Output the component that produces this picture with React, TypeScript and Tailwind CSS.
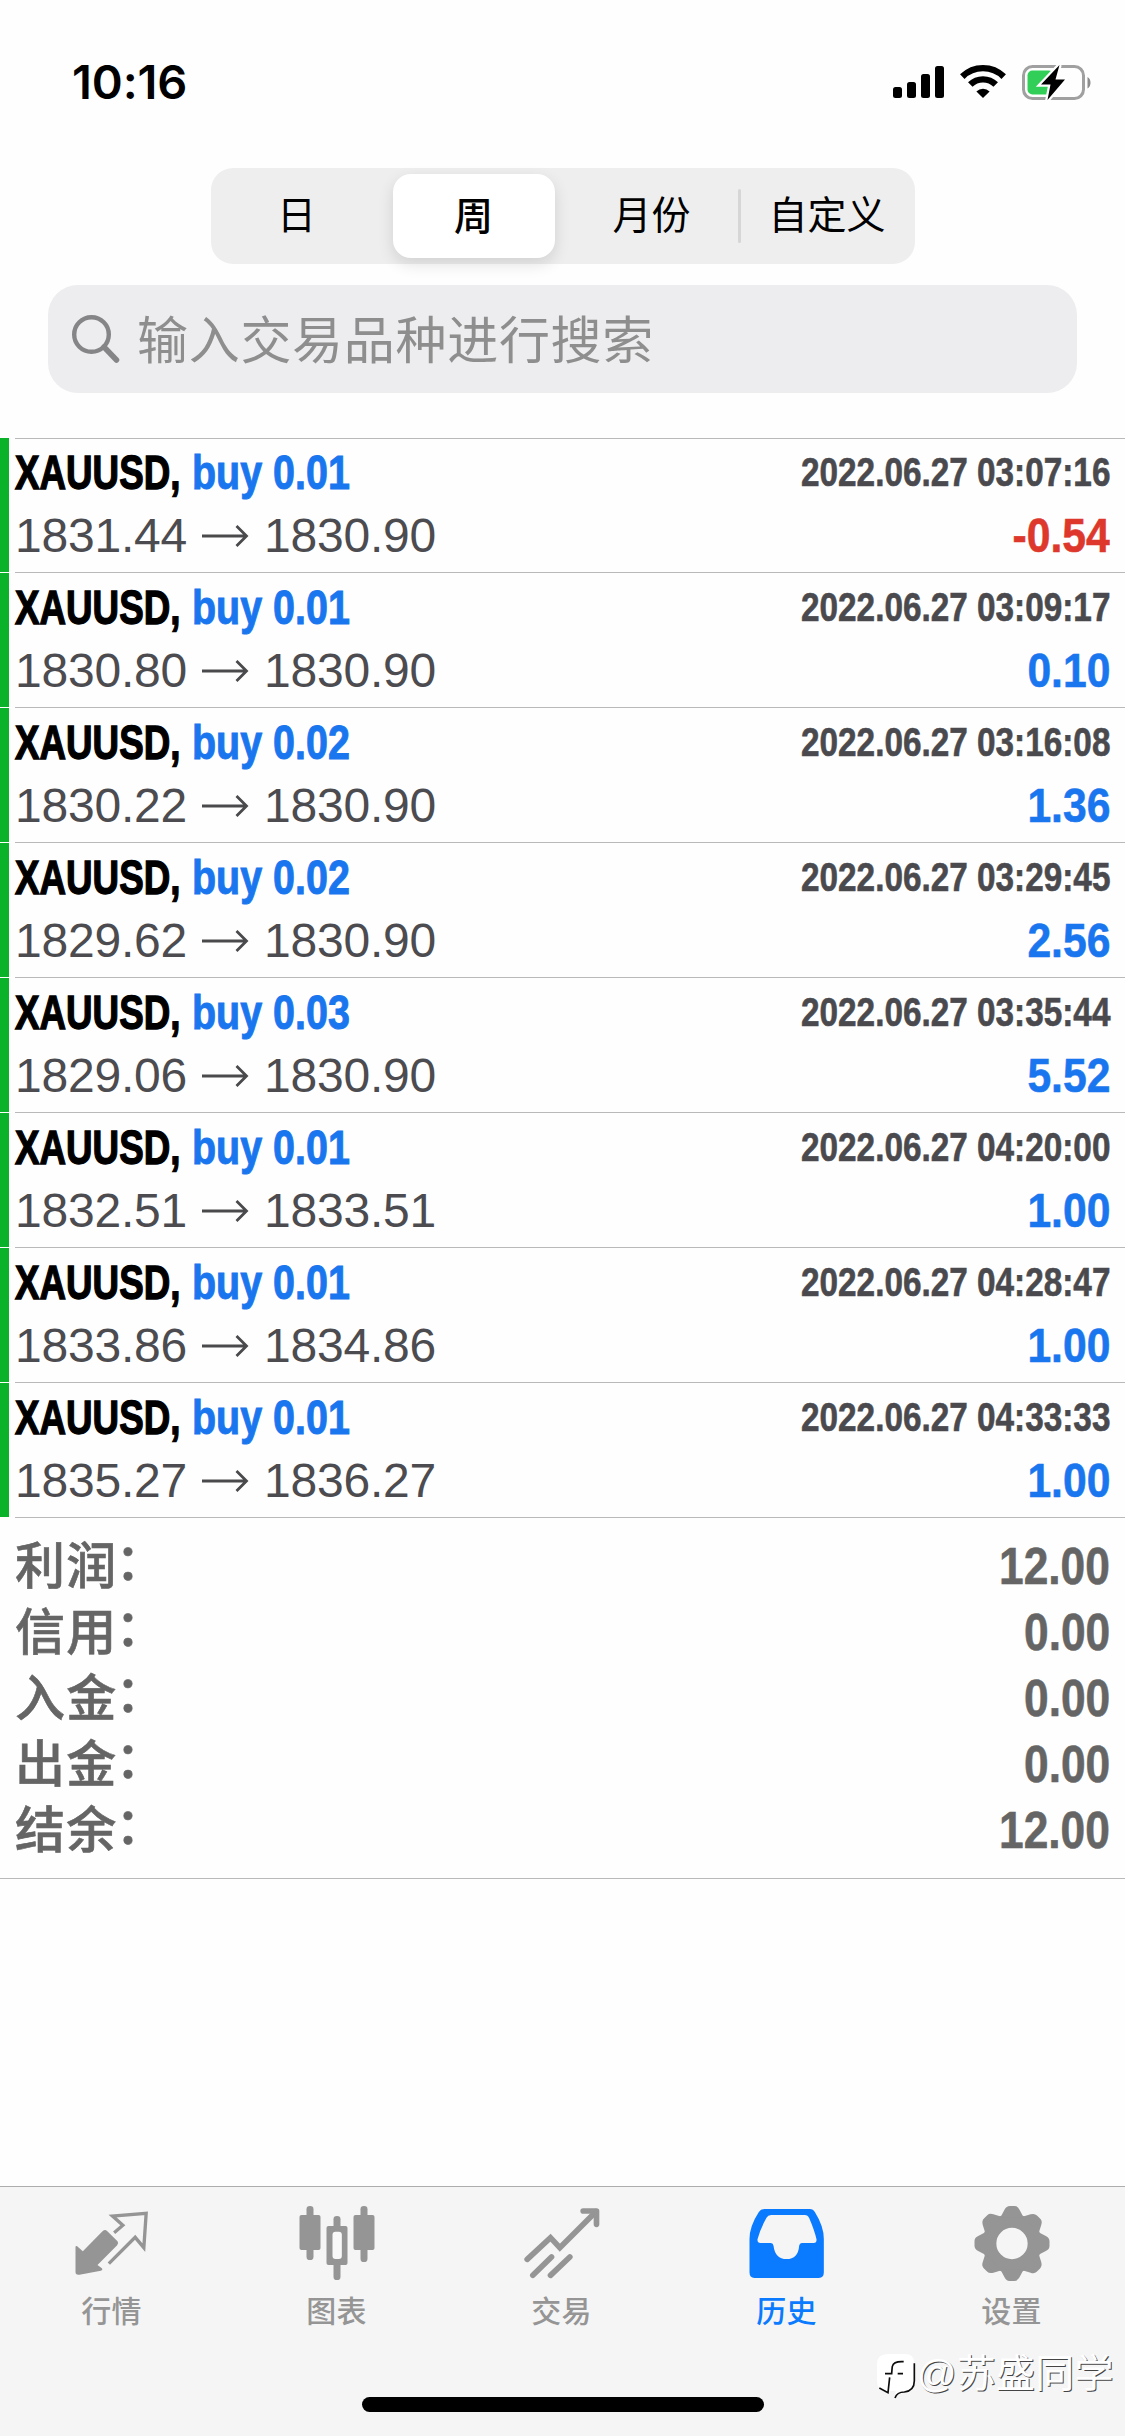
import type { ReactNode } from "react";

const CJK = "font-['Liberation_Sans','Noto_Sans_CJK_SC',sans-serif]";

const deals = [
  { volume: "0.01", open: "1831.44", close: "1830.90", time: "03:07:16", profit: "-0.54" },
  { volume: "0.01", open: "1830.80", close: "1830.90", time: "03:09:17", profit: "0.10" },
  { volume: "0.02", open: "1830.22", close: "1830.90", time: "03:16:08", profit: "1.36" },
  { volume: "0.02", open: "1829.62", close: "1830.90", time: "03:29:45", profit: "2.56" },
  { volume: "0.03", open: "1829.06", close: "1830.90", time: "03:35:44", profit: "5.52" },
  { volume: "0.01", open: "1832.51", close: "1833.51", time: "04:20:00", profit: "1.00" },
  { volume: "0.01", open: "1833.86", close: "1834.86", time: "04:28:47", profit: "1.00" },
  { volume: "0.01", open: "1835.27", close: "1836.27", time: "04:33:33", profit: "1.00" },
];

const totals = [
  ["利润", "12.00"],
  ["信用", "0.00"],
  ["入金", "0.00"],
  ["出金", "0.00"],
  ["结余", "12.00"],
];

function StatusBar() {
  return (
    <div className="flex h-[168px] items-start justify-between pl-[72px] pr-[33px] pt-[60px]">
      <div className="font-['Inter',sans-serif] text-[47px] leading-[44px] font-semibold tracking-[-0.1px] text-black">10:16</div>
      <div className="flex items-center pt-[4px]">
        <svg className="h-[36px] w-[52px]" viewBox="0 0 52 36">
          <rect x="0" y="23" width="9" height="11" rx="2.5" />
          <rect x="14" y="18" width="9" height="16" rx="2.5" />
          <rect x="28" y="10" width="9" height="24" rx="2.5" />
          <rect x="42" y="2" width="9" height="32" rx="2.5" />
        </svg>
        <svg className="ml-[15px] h-[36px] w-[46px]" viewBox="0 0 46 36" fill="none" stroke="#000" strokeWidth="6.4">
          <path d="M2.3 12.6a29.5 29.5 0 0 1 41.4 0" />
          <path d="M10.3 20.6a18 18 0 0 1 25.4 0" />
          <path d="M23 34l-6.6-6.6a9.4 9.4 0 0 1 13.2 0z" fill="#000" stroke="none" />
        </svg>
        <svg className="ml-[16px] h-[36px] w-[70px]" viewBox="0 0 70 36">
          <rect x="1.5" y="2.5" width="60" height="32" rx="9" fill="none" stroke="#a0a0a0" strokeWidth="3" />
          <path d="M65.5 13c4 2 4 9.5 0 11.500z" fill="#8c8c8c" />
          <rect x="5.5" y="6.5" width="26" height="24" rx="5" fill="#32cf58" />
          <path d="M37.5 1L19 20.5h9.500L25.500 36 43 15.500h-9.500z" fill="#000" stroke="#fff" strokeWidth="4.5" paintOrder="stroke" />
        </svg>
      </div>
    </div>
  );
}

function PeriodTabs() {
  return (
    <div className="mx-auto flex h-[96px] w-[704px] items-center rounded-[22px] bg-[#eeeeee] text-[39px] leading-[86px] text-black">
      <div className="w-[172px] text-center">日</div>
      <div className="ml-[10px] h-[84px] w-[162px] rounded-[18px] bg-white text-center font-medium shadow-[0_6px_16px_rgba(0,0,0,0.12)]">周</div>
      <div className="ml-[11px] w-[172px] text-center">月份</div>
      <div className="h-[54px] w-[3px] rounded-full bg-[#d6d6d8]" />
      <div className="w-[173px] text-center">自定义</div>
    </div>
  );
}

function SearchBox() {
  return (
    <div className="mx-[48px] mt-[21px] flex h-[108px] items-center rounded-[30px] bg-[#ededef] pl-[24px] text-[#8e8e8e]">
      <svg className="h-[50px] w-[50px]" viewBox="0 0 50 50" fill="none" stroke="#858587" strokeLinecap="round">
        <circle cx="19.5" cy="20.5" r="17.3" strokeWidth="4.4" />
        <path d="M32 33L44.5 46" strokeWidth="5.5" />
      </svg>
      <span className="ml-[15px] pt-[5px] text-[51px] leading-[60px] tracking-[0.7px]">输入交易品种进行搜索</span>
    </div>
  );
}

function LongArrow() {
  return (
    <svg className="mr-[15px] ml-[16px] h-[22px] w-[47px]" viewBox="0 0 47 22" fill="none" stroke="#4a4a4c" strokeWidth="2.8">
      <path d="M0 11h44M34.5 1L44.5 11 34.5 21" />
    </svg>
  );
}

function DealRow({ deal }: { deal: (typeof deals)[number] }) {
  return (
    <div className="flex h-[135px]">
      <div className="mb-px w-[9px] bg-[#09b228]" />
      <div className="ml-[6px] flex-1 border-b border-[#b9b9bb] pr-[15px] pt-[4px]">
        <div className="flex h-[60px] items-center justify-between font-bold">
          <div className="flex pt-px">
            <span className="w-[168px] origin-left scale-x-[0.75] text-[49px] whitespace-nowrap text-black [-webkit-text-stroke:1.4px_#000]">XAUUSD,</span>
            <span className="w-[150px] origin-left translate-x-[9px] scale-x-[0.805] text-[49px] whitespace-nowrap text-[#1976ee] [-webkit-text-stroke:1px_#1976ee]">buy {deal.volume}</span>
          </div>
          <span className="origin-right scale-x-[0.833] text-[40px] whitespace-nowrap text-[#4a4a4e] [-webkit-text-stroke:0.6px_#4a4a4e]">2022.06.27 {deal.time}</span>
        </div>
        <div className="flex h-[68px] items-center justify-between">
          <div className="flex items-center text-[48px] tracking-[-0.2px] text-[#4c4c50]">
            <span className="w-[171px]">{deal.open}</span>
            <LongArrow />
            <span>{deal.close}</span>
          </div>
          <span className={`origin-right scale-x-[0.87] text-[49px] font-bold [-webkit-text-stroke:0.6px_currentColor] ${deal.profit.startsWith("-") ? "text-[#dd382b]" : "text-[#1976ee]"}`}>{deal.profit}</span>
        </div>
      </div>
    </div>
  );
}

function Totals() {
  return (
    <div className="h-[361px] border-b border-[#b9b9bb] pr-[15px] pl-[15px] pt-[15px] text-[#656565]">
      {totals.map(([label, value]) => (
        <div key={label} className="flex h-[66px] items-center justify-between">
          <span className="flex pt-[2px] text-[50px] leading-[66px] font-medium tracking-[1.2px] [-webkit-text-stroke:0.6px_#656565]">
            {label}
            <span className="relative -top-[4px] -left-[2px]">：</span>
          </span>
          <span className="origin-right scale-x-[0.86] text-[51.5px] leading-[66px] font-bold [-webkit-text-stroke:0.6px_#656565]">{value}</span>
        </div>
      ))}
    </div>
  );
}

function Tab({ label, box, active, children }: { label: string; box: string; active?: boolean; children: ReactNode }) {
  return (
    <div className={`flex w-[225px] flex-col items-center pt-[17px] ${active ? "text-[#0a7aff]" : "text-[#959595]"}`}>
      <svg className="h-[78px] w-[78px]" viewBox={box} fill="currentColor" stroke="none">
        {children}
      </svg>
      <span className="mt-[8px] mr-[2px] text-[30px] leading-[44px] font-medium tracking-[0.3px]">{label}</span>
    </div>
  );
}

const gearTeeth = [0, 45, 90, 135, 180, 225, 270, 315];

function TabBar() {
  return (
    <div className="relative h-[250px] border-t border-[#adadad] bg-[#f5f5f5]">
      <div className="flex">
        <Tab label="行情" box="220.5 102 234 234">
          <path d="M225 232q0-6 5-3l17 15 59-60q7-7 13-2l32 32q5 6-1 12l-59 59 13 10q4 5-3 7l-64 12q-12 2-12-8z" />
          <path d="M341 188l26-22-31-28 101-8-7 103-26-31-79 79" fill="none" stroke="currentColor" strokeWidth="10" />
        </Tab>
        <Tab label="图表" box="895.5 102 234 234">
          <rect x="918" y="108" width="21" height="162" rx="10" />
          <rect x="897" y="135" width="63" height="105" rx="6" />
          <rect x="1080" y="108" width="21" height="168" rx="10" />
          <rect x="1059" y="135" width="63" height="105" rx="6" />
          <rect x="999" y="138" width="21" height="192" rx="10" />
          <rect x="978" y="168" width="63" height="117" rx="6" />
          <rect x="996" y="185" width="28" height="82" rx="9" fill="#f9f9f9" />
        </Tab>
        <Tab label="交易" box="370.5 102 234 234">
          <g fill="none" stroke="currentColor" strokeWidth="17" strokeLinecap="round">
            <path d="M380 268l70-65 28 30 108-108" />
            <path d="M397 316l56-55M450 316l58-55" />
            <path d="M548 123h40v40" strokeLinejoin="round" />
          </g>
        </Tab>
        <Tab label="历史" box="1045.5 102 234 234" active>
          <path fillRule="evenodd" d="M1092 117h136q10 0 15 9 27 43 27 81v100q0 17-15 17h-193q-15 0-15-17V207q0-38 28-81 6-9 17-9zM1112 135q-10 0-14 8-20 36-27 65-1 11 9 11h31q7 0 8 8 5 40 39 40 35 0 38-40 1-8 8-8h36q9 0 8-11-6-27-22-64-4-9-13-9z" />
        </Tab>
        <Tab label="设置" box="520.5 102 234 234">
          <circle cx="634.5" cy="220.5" r="68" fill="none" stroke="currentColor" strokeWidth="42" />
          {gearTeeth.map((angle) => (
            <path key={angle} transform={`rotate(${angle} 634.5 220.5)`} d="M600 142l12-23q6-11 16-11h14q10 0 15 11l12 23z" />
          ))}
        </Tab>
      </div>
      <div className="absolute top-[210px] left-[362px] h-[15px] w-[402px] rounded-full bg-black" />
      <div className="absolute top-[165px] left-[875px] flex items-start">
        <svg className="h-[48px] w-[42px]" viewBox="30 36 126 144">
          <path d="M68 42h52q28 0 28 28v52q0 26-24 34l-26 4-8 15 2-22H74l-6 7-26-14q-6-12-6-24V72q0-30 32-30z" fill="#fff" />
          <path d="M148 70v52q0 30-30 34-22 0-28 18M116 65q-30-2-34 14-1 6-2 22H60M74 112l-5 46-26-14M98 101h16" fill="none" stroke="#0c0c0c" strokeWidth="5" />
        </svg>
        <span className="text-[39px] leading-[43px] tracking-[0.2px] whitespace-nowrap text-white [text-shadow:1px_1px_0_#444]">@苏盛同学</span>
      </div>
    </div>
  );
}

export default function App() {
  return (
    <div className={`flex h-[2436px] w-[1125px] flex-col overflow-hidden bg-[#fefefe] ${CJK}`}>
      <StatusBar />
      <PeriodTabs />
      <SearchBox />
      <div className="relative mt-[45px]">
        <div className="absolute top-0 right-0 left-[15px] h-px bg-[#b9b9bb]" />
        {deals.map((deal) => (
          <DealRow key={deal.time} deal={deal} />
        ))}
      </div>
      <Totals />
      <div className="flex-1" />
      <TabBar />
    </div>
  );
}
